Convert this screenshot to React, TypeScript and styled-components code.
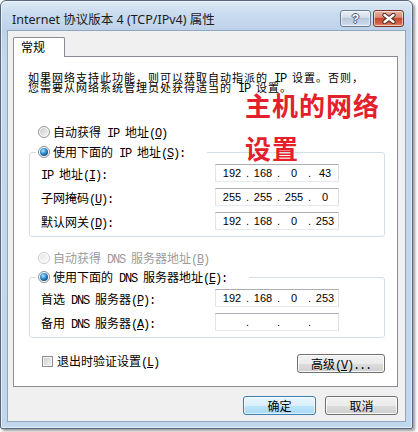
import React from 'react';
import styled, { createGlobalStyle } from 'styled-components';

const Global = createGlobalStyle`
  html, body { margin: 0; padding: 0; background: #ffffff; }
  body {
    width: 418px; height: 432px; overflow: hidden;
    font-family: "Noto Sans CJK SC", sans-serif;
  }
`;

const Window = styled.div`
  width: 413px;
  height: 429px;
  box-sizing: border-box;
  border: 1px solid #55687e;
  border-radius: 6px 6px 2px 2px;
  background: linear-gradient(180deg, #dfeaf6 0px, #cadcef 12px, #bdd2e9 29px, #c4d8ed 60px, #c2d7ec 100%);
  box-shadow: 2px 2px 3px rgba(0, 0, 0, 0.4), inset 0 0 0 1px rgba(255, 255, 255, 0.55);
  display: flex;
  flex-direction: column;
  padding: 0 6px 6px 6px;
`;

const TitleBar = styled.div`
  height: 29px;
  display: flex;
  align-items: flex-start;
  padding-left: 5px;
`;

const Title = styled.div`
  margin-top: 11px;
  font-family: "Noto Sans", "Noto Sans CJK SC", sans-serif;
  font-size: 12.5px;
  line-height: 16px;
  color: #1b1b1b;
  flex: 1;
  white-space: nowrap;
`;

const CapGroup = styled.div`
  display: flex;
  gap: 2px;
  margin-top: 9px;
  margin-right: 2px;
`;

const CapBtn = styled.div<{ $close?: boolean }>`
  width: 31px;
  height: 17px;
  box-sizing: border-box;
  border: 1px solid ${p => (p.$close ? '#7d3328' : '#6b7d93')};
  border-radius: 3px;
  background: ${p =>
    p.$close
      ? 'linear-gradient(180deg, #eab2a6 0%, #db8a75 42%, #c6482f 50%, #d06047 80%, #dd8c6f 100%)'
      : 'linear-gradient(180deg, #e9f0f8 0%, #d3deea 42%, #b9c9dc 50%, #c5d4e6 80%, #d5e1ee 100%)'};
  box-shadow: inset 0 0 0 1px rgba(255, 255, 255, 0.55);
  display: flex;
  align-items: center;
  justify-content: center;
`;

const HelpGlyph = styled.span`
  font-family: "Liberation Sans", sans-serif;
  font-weight: bold;
  font-size: 12px;
  line-height: 12px;
  color: #ffffff;
  text-shadow: 1px 0 0 #4a5b72, -1px 0 0 #4a5b72, 0 1px 0 #4a5b72, 0 -1px 0 #4a5b72;
`;

const Client = styled.div`
  flex: 1;
  box-sizing: border-box;
  background: #f0f0f0;
  border: 1px solid #8fa6bf;
  padding: 6px 7px 6px 5px;
  display: flex;
  flex-direction: column;
`;

const TabStrip = styled.div`
  display: flex;
`;

const Tab = styled.div`
  width: 52px;
  height: 20px;
  box-sizing: border-box;
  border: 1px solid #898c95;
  border-bottom: none;
  border-radius: 2px 2px 0 0;
  background: #ffffff;
  margin-bottom: -1px;
  position: relative;
  z-index: 1;
  font-size: 12px;
  line-height: 18px;
  padding-left: 7px;
`;

const Panel = styled.div`
  position: relative;
  height: 331px;
  box-sizing: border-box;
  border: 1px solid #898c95;
  background: #ffffff;
  padding: 0 11px 0 14px;
  display: flex;
  flex-direction: column;
  font-size: 12px;
  color: #000;
`;

const Para = styled.div`
  margin-top: 15px;
  height: 20px;
  font-size: 11px;
  letter-spacing: 1px;
  line-height: 10px;
  white-space: nowrap;
`;

const L = styled.span`
  font-family: "Liberation Mono", monospace;
  font-size: 12px;
  letter-spacing: -1.2px;
  line-height: 0;
  white-space: pre;
`;

const Note = styled.div`
  position: absolute;
  left: 231px;
  top: 35px;
  display: flex;
  flex-direction: column;
  gap: 17px;
  font-family: "Noto Sans CJK SC", sans-serif;
  font-weight: bold;
  font-size: 26px;
  line-height: 26px;
  letter-spacing: 1px;
  color: #e4212b;
  white-space: nowrap;
`;

const RadioRow = styled.div<{ $disabled?: boolean; $indent?: number; $top?: number }>`
  display: flex;
  align-items: center;
  height: 14px;
  gap: 3px;
  margin-left: ${p => p.$indent ?? 0}px;
  margin-top: ${p => p.$top ?? 0}px;
  white-space: nowrap;
  line-height: 14px;
  color: ${p => (p.$disabled ? '#9b9b9b' : '#000000')};
`;

const Radio = styled.span<{ $checked?: boolean; $disabled?: boolean }>`
  position: relative;
  width: 12px;
  height: 12px;
  margin-left: 2px;
  box-sizing: border-box;
  border-radius: 50%;
  border: 1px solid ${p => (p.$disabled ? '#c9c9c9' : '#8b8d8f')};
  background: #ffffff;
  flex: none;
  &::after {
    content: '';
    position: absolute;
    inset: 1px;
    border-radius: 50%;
    background: ${p =>
      p.$checked
        ? 'radial-gradient(circle at 40% 35%, #bfe6fb 0, #3c9ad8 35%, #0c4d88 75%, #1a5f96 100%)'
        : p.$disabled
        ? 'linear-gradient(135deg, #e6e6e6, #fbfbfb)'
        : 'linear-gradient(135deg, #c9cacb, #f4f4f4)'};
  }
`;

const Group = styled.fieldset<{ $top: number }>`
  margin: ${p => p.$top}px 0 0 1px;
  padding: 5px 0 6px 0;
  width: 356px;
  box-sizing: border-box;
  border: 1px solid #d5dfe5;
  border-radius: 3px;
  min-inline-size: 0;
  display: flex;
  flex-direction: column;
  gap: 6px;
`;

const Legend = styled.legend`
  margin-left: 6px;
  padding: 0 22px 0 0;
  height: 14px;
  background: #ffffff;
`;

const FieldRow = styled.div`
  display: grid;
  grid-template-columns: 174px 124px;
  align-items: center;
  height: 18px;
  padding-left: 11px;
  white-space: nowrap;
`;

const IpBox = styled.div`
  box-sizing: border-box;
  width: 124px;
  height: 18px;
  border: 1px solid;
  border-color: #abadb3 #dbdfe6 #e3e9ef #e2e3ea;
  background: #ffffff;
  display: grid;
  grid-template-columns: 24px 7px 24px 7px 24px 7px 24px;
  align-items: center;
  padding-left: 4px;
  font-family: "Liberation Sans", sans-serif;
  font-size: 11px;
  line-height: 16px;
  color: #000;
`;

const Seg = styled.span`
  text-align: center;
`;

const BottomRow = styled.div`
  margin: 16px 0 0 1px;
  width: 356px;
  height: 19px;
  display: flex;
  align-items: flex-start;
  justify-content: space-between;
`;

const CheckLabel = styled.div`
  display: flex;
  align-items: center;
  gap: 4px;
  height: 14px;
  margin-left: 13px;
  line-height: 14px;
  white-space: nowrap;
`;

const CheckBox = styled.span`
  width: 11px;
  height: 11px;
  box-sizing: border-box;
  border: 1px solid #8e8f8f;
  background: linear-gradient(135deg, #cbcccd, #f5f5f5);
  box-shadow: inset 0 0 0 1px #f4f4f4;
  flex: none;
`;

const Button = styled.button<{ $w: number; $default?: boolean }>`
  width: ${p => p.$w}px;
  height: 19px;
  box-sizing: border-box;
  padding: 0;
  border: 1px solid ${p => (p.$default ? '#3c7fb1' : '#707070')};
  border-radius: 3px;
  background: ${p =>
    p.$default
      ? 'linear-gradient(180deg, #eaf6fd 0%, #d9f0fc 50%, #bee6fd 51%, #a7d9f5 100%)'
      : 'linear-gradient(180deg, #f2f2f2 0%, #ebebeb 50%, #dddddd 51%, #cfcfcf 100%)'};
  box-shadow: inset 0 0 0 1px ${p => (p.$default ? 'rgba(255,255,255,0.6)' : 'rgba(255,255,255,0.85)')};
  font-family: "Noto Sans CJK SC", sans-serif;
  font-size: 12px;
  line-height: 17px;
  color: #000;
  white-space: nowrap;
`;

const ButtonRow = styled.div`
  margin-top: 9px;
  display: flex;
  justify-content: flex-end;
  gap: 9px;
`;

const CloseIcon = () => (
  <svg width="14" height="11" viewBox="0 0 14 11">
    <path d="M2.5 2 L11.5 9 M11.5 2 L2.5 9" stroke="#4b2119" strokeWidth="4.2" strokeLinecap="round" fill="none" />
    <path d="M2.5 2 L11.5 9 M11.5 2 L2.5 9" stroke="#ffffff" strokeWidth="2.4" strokeLinecap="round" fill="none" />
  </svg>
);

const Ip = ({ v }: { v: string[] }) => (
  <IpBox>
    <Seg>{v[0]}</Seg>
    <Seg>.</Seg>
    <Seg>{v[1]}</Seg>
    <Seg>.</Seg>
    <Seg>{v[2]}</Seg>
    <Seg>.</Seg>
    <Seg>{v[3]}</Seg>
  </IpBox>
);

export default function App() {
  return (
    <>
      <Global />
      <Window>
        <TitleBar>
          <Title>Internet 协议版本 4 (TCP/IPv4) 属性</Title>
          <CapGroup>
            <CapBtn>
              <HelpGlyph>?</HelpGlyph>
            </CapBtn>
            <CapBtn $close>
              <CloseIcon />
            </CapBtn>
          </CapGroup>
        </TitleBar>
        <Client>
          <TabStrip>
            <Tab>常规</Tab>
          </TabStrip>
          <Panel>
            <Para>
              如果网络支持此功能，则可以获取自动指派的<L> IP </L>设置。否则，
              <br />
              您需要从网络系统管理员处获得适当的<L> IP </L>设置。
            </Para>

            <RadioRow $indent={8} $top={33}>
              <Radio />
              <span>
                自动获得<L> IP </L>地址<L>(<u>O</u>)</L>
              </span>
            </RadioRow>

            <Group $top={6}>
              <Legend>
                <RadioRow>
                  <Radio $checked />
                  <span>
                    使用下面的<L> IP </L>地址<L>(<u>S</u>):</L>
                  </span>
                </RadioRow>
              </Legend>
              <FieldRow>
                <span>
                  <L>IP </L>地址<L>(<u>I</u>):</L>
                </span>
                <Ip v={['192', '168', '0', '43']} />
              </FieldRow>
              <FieldRow>
                <span>
                  子网掩码<L>(<u>U</u>):</L>
                </span>
                <Ip v={['255', '255', '255', '0']} />
              </FieldRow>
              <FieldRow>
                <span>
                  默认网关<L>(<u>D</u>):</L>
                </span>
                <Ip v={['192', '168', '0', '253']} />
              </FieldRow>
            </Group>

            <RadioRow $indent={8} $top={14} $disabled>
              <Radio $disabled />
              <span>
                自动获得<L> DNS </L>服务器地址<L>(<u>B</u>)</L>
              </span>
            </RadioRow>

            <Group $top={5}>
              <Legend>
                <RadioRow>
                  <Radio $checked />
                  <span>
                    使用下面的<L> DNS </L>服务器地址<L>(<u>E</u>):</L>
                  </span>
                </RadioRow>
              </Legend>
              <FieldRow>
                <span>
                  首选<L> DNS </L>服务器<L>(<u>P</u>):</L>
                </span>
                <Ip v={['192', '168', '0', '253']} />
              </FieldRow>
              <FieldRow>
                <span>
                  备用<L> DNS </L>服务器<L>(<u>A</u>):</L>
                </span>
                <Ip v={['', '', '', '']} />
              </FieldRow>
            </Group>

            <BottomRow>
              <CheckLabel>
                <CheckBox />
                <span>
                  退出时验证设置<L>(<u>L</u>)</L>
                </span>
              </CheckLabel>
              <Button $w={88}>
                高级<L>(<u>V</u>)...</L>
              </Button>
            </BottomRow>

            <Note>
              <span>主机的网络</span>
              <span>设置</span>
            </Note>
          </Panel>
          <ButtonRow>
            <Button $w={73} $default>
              确定
            </Button>
            <Button $w={73}>取消</Button>
          </ButtonRow>
        </Client>
      </Window>
    </>
  );
}
